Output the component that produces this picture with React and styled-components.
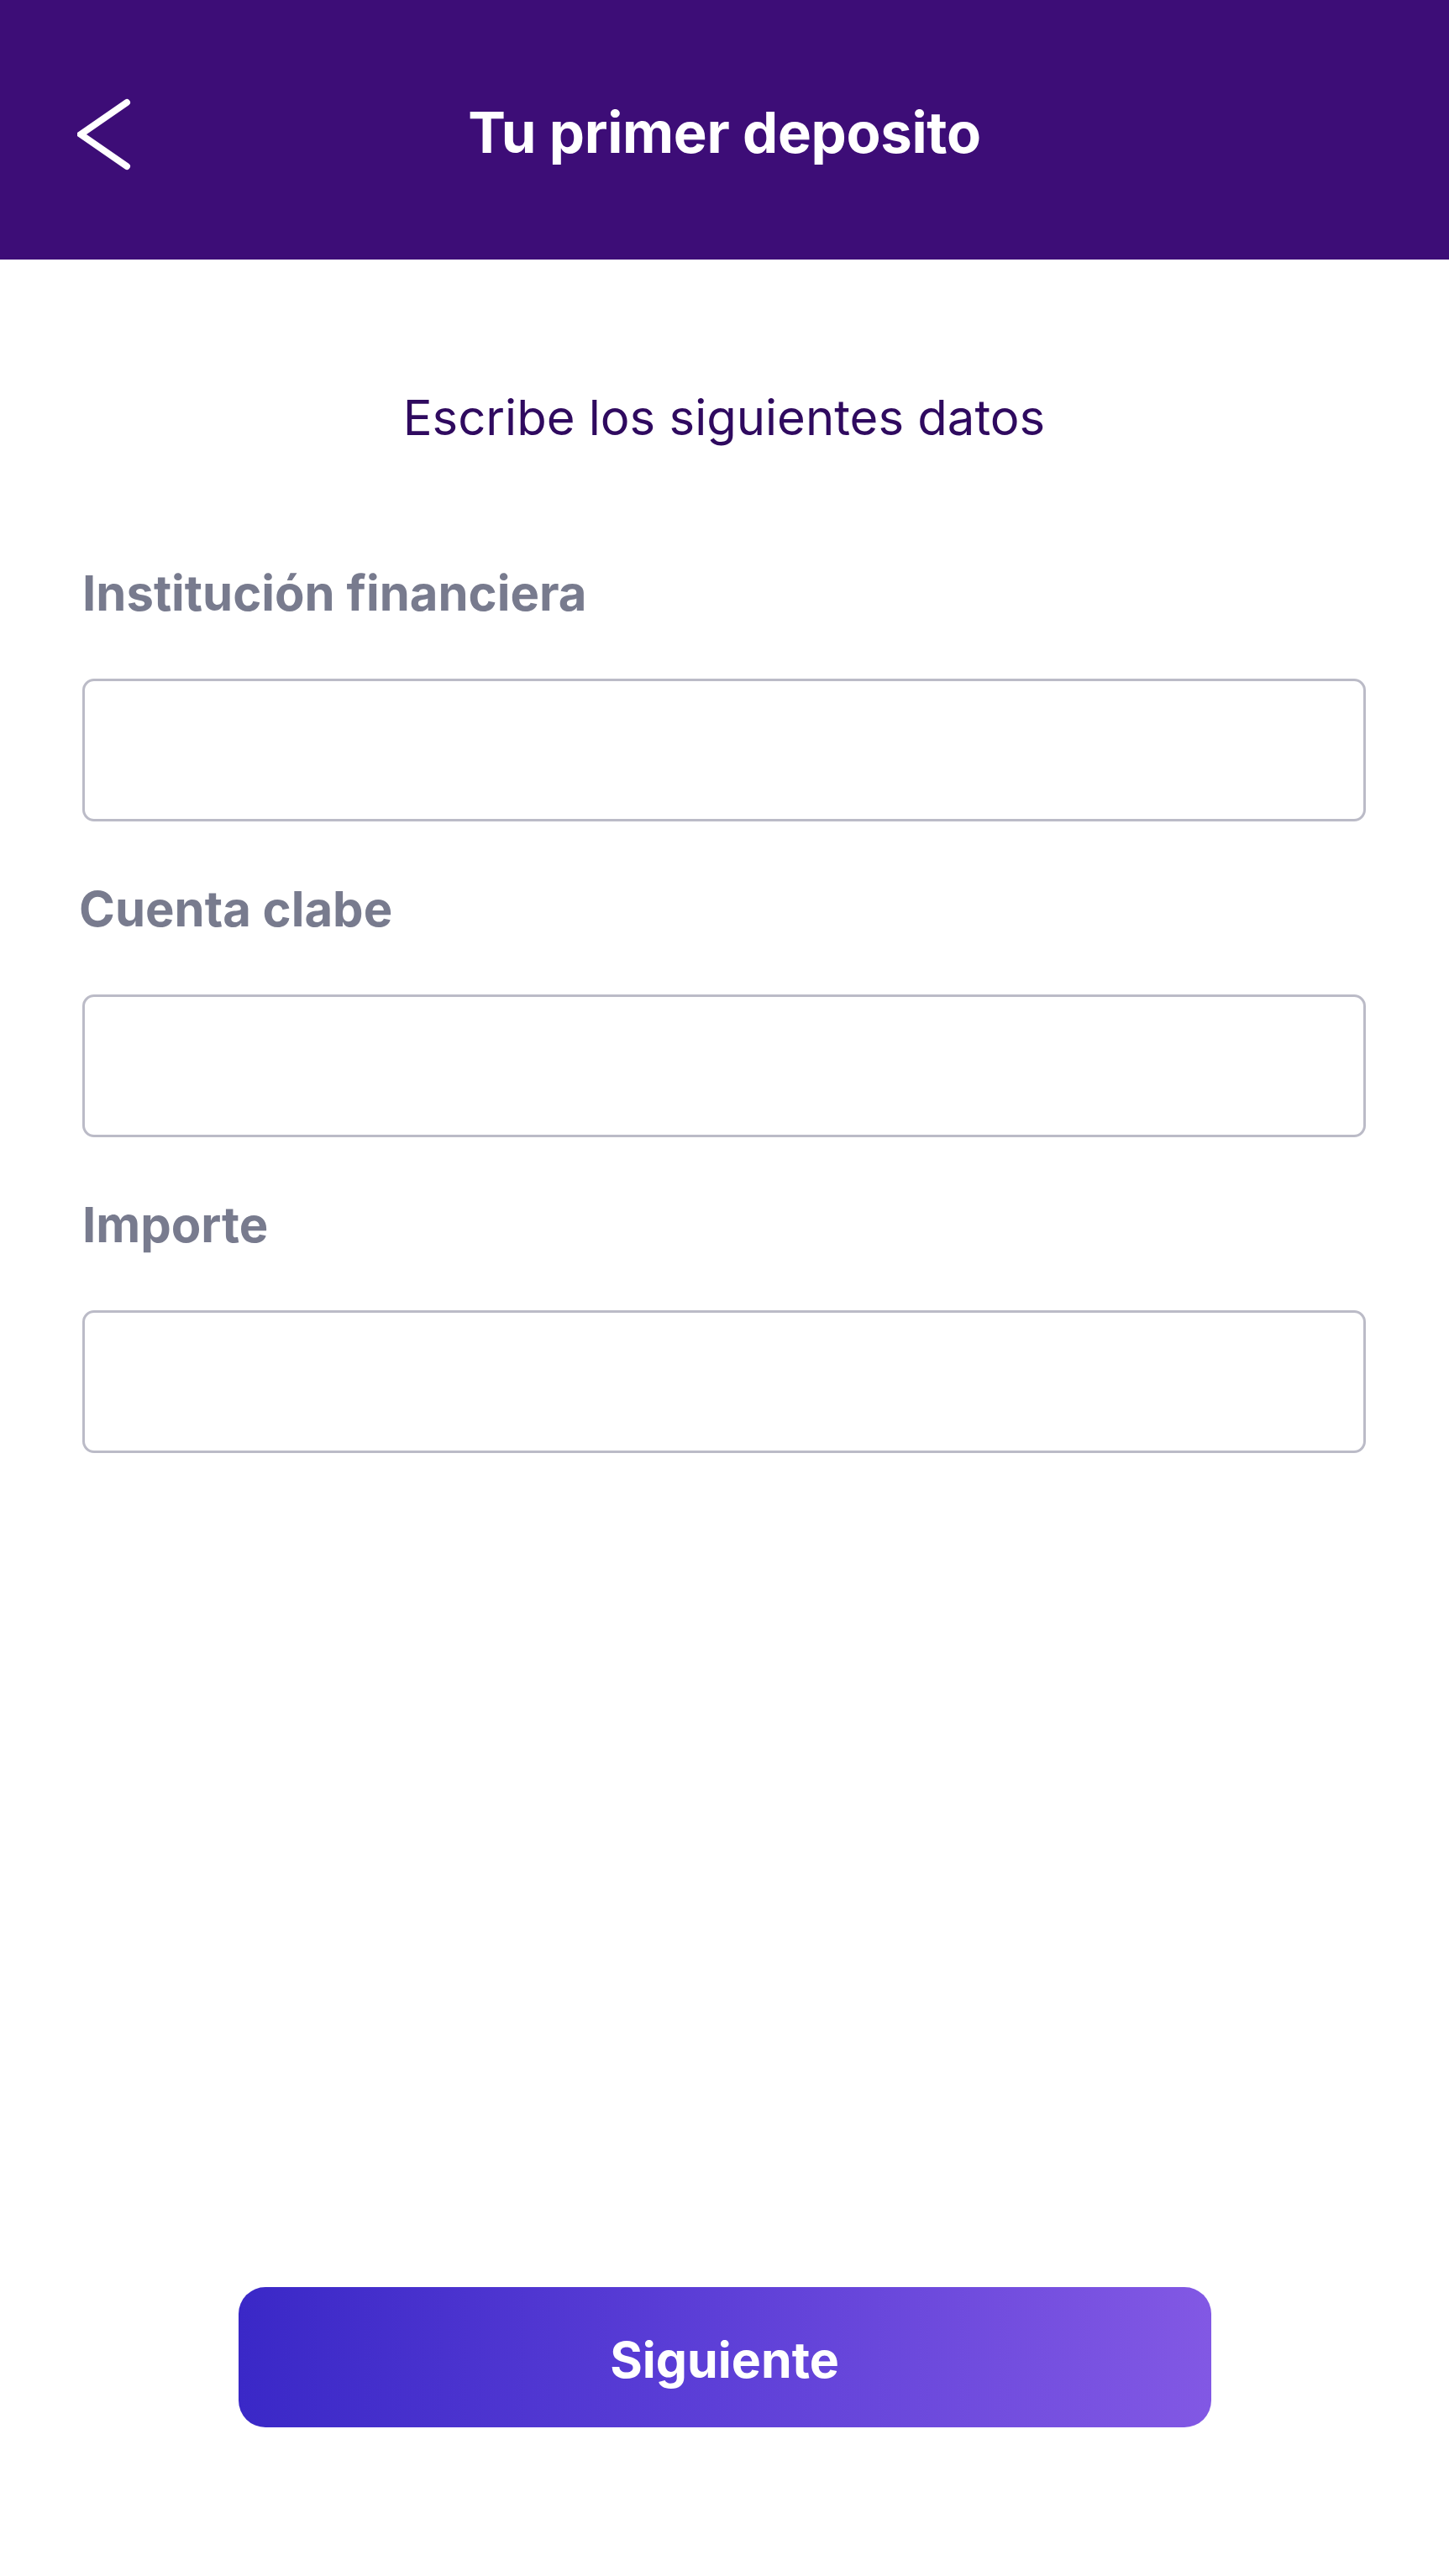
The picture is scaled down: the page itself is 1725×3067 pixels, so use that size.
import React from 'react';
import styled, { createGlobalStyle } from 'styled-components';

const GlobalStyle = createGlobalStyle`
  * { box-sizing: border-box; }
  html, body {
    margin: 0;
    padding: 0;
    background: #ffffff;
    font-family: Inter, "Noto Sans", "Liberation Sans", sans-serif;
  }
`;

const Page = styled.div`
  min-height: 100vh;
  display: flex;
  flex-direction: column;
  background: #ffffff;
`;

const Header = styled.header`
  height: 309px;
  background: #3d0d77;
  display: grid;
  grid-template-columns: 1fr auto 1fr;
  align-items: center;
  padding: 8px 0 0 92px;
`;

const BackButton = styled.button`
  justify-self: start;
  width: 68px;
  height: 90px;
  padding: 0;
  border: 0;
  background: transparent;
  cursor: pointer;
  display: flex;
  align-items: center;
  justify-content: center;
  margin-top: 2px;
`;

const Title = styled.h1`
  margin: 0;
  color: #ffffff;
  font-size: 67px;
  line-height: 1.2;
  font-weight: 700;
  letter-spacing: -0.3px;
  transform: translateX(-46px);
`;

const Main = styled.main`
  padding: 152px 99px 0 98px;
  display: flex;
  flex-direction: column;
`;

const Subtitle = styled.p`
  margin: 0 0 140px;
  text-align: center;
  color: #2f0a5f;
  font-size: 58px;
  line-height: 72px;
  font-weight: 400;
`;

const Fields = styled.div`
  display: flex;
  flex-direction: column;
  gap: 71px;
`;

const Field = styled.div`
  display: flex;
  flex-direction: column;
  gap: 68px;
`;

const Label = styled.label`
  color: #787b8e;
  font-size: 58px;
  line-height: 67px;
  font-weight: 700;
  margin-left: ${(props) => props.shift || 0}px;
`;

const Input = styled.input`
  width: 100%;
  height: 170px;
  border: 3.5px solid #bbbbc7;
  border-radius: 14px;
  background: #ffffff;
  outline: 0;
  padding: 0 32px;
  font-family: inherit;
  font-size: 52px;
  color: #2f0a5f;
`;

const Spacer = styled.div`
  flex: 1;
`;

const Footer = styled.div`
  display: flex;
  justify-content: center;
  padding: 0 0 177px 0;
`;

const NextButton = styled.button`
  width: 1158px;
  height: 167px;
  padding: 6px 0 0;
  border: 0;
  border-radius: 32px;
  background: linear-gradient(90deg, #3a28c7 0%, #5a3dd6 45%, #8258e4 100%);
  color: #ffffff;
  font-family: inherit;
  font-size: 59px;
  font-weight: 700;
  cursor: pointer;
`;

function ChevronLeft() {
  return (
    <svg width="68" height="90" viewBox="0 0 68 90" fill="none">
      <polyline
        points="59,7 4,45 59,83"
        stroke="#ffffff"
        strokeWidth="8"
        strokeLinecap="round"
        strokeLinejoin="miter"
      />
    </svg>
  );
}

const fields = [
  { id: 'institucion', label: 'Institución financiera', shift: 0 },
  { id: 'clabe', label: 'Cuenta clabe', shift: -4 },
  { id: 'importe', label: 'Importe', shift: 0 },
];

export default function App() {
  return (
    <Page>
      <GlobalStyle />
      <Header>
        <BackButton aria-label="Regresar">
          <ChevronLeft />
        </BackButton>
        <Title>Tu primer deposito</Title>
        <span />
      </Header>

      <Main>
        <Subtitle>Escribe los siguientes datos</Subtitle>
        <Fields>
          {fields.map((f) => (
            <Field key={f.id}>
              <Label htmlFor={f.id} shift={f.shift}>{f.label}</Label>
              <Input id={f.id} type="text" />
            </Field>
          ))}
        </Fields>
      </Main>

      <Spacer />

      <Footer>
        <NextButton>Siguiente</NextButton>
      </Footer>
    </Page>
  );
}
